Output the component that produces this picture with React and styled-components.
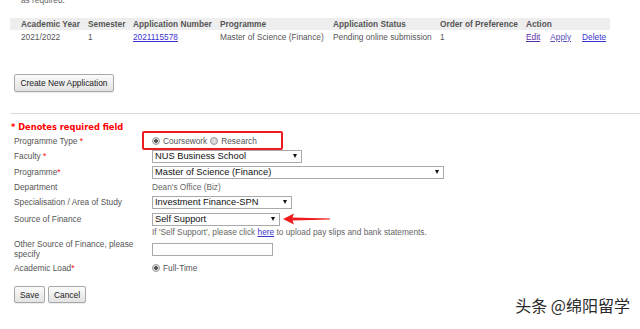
import React from "react";
import styled, { createGlobalStyle } from "styled-components";

const Global = createGlobalStyle`
  html, body { margin: 0; padding: 0; background: #fff; }
  body { font-family: "Liberation Sans", Arial, sans-serif; overflow: hidden; }
`;

const Page = styled.div`
  position: relative;
  width: 640px;
  height: 329px;
  overflow: hidden;
  padding-left: 10px;
  box-sizing: border-box;
`;

const TopNote = styled.div`
  margin-top: -5px;
  padding-left: 11px;
  line-height: 10px;
  height: 10px;
  font-size: 8.3px;
  color: #666;
`;

const Table = styled.div`
  width: 600px;
  margin-top: 13px;
`;

const TRow = styled.div`
  display: grid;
  grid-template-columns: 67px 45px 87px 113px 107px 86px 1fr;
  padding-left: 11px;
  height: ${(p) => p.$h}px;
  align-items: center;
  background: ${(p) => (p.$head ? "#eeeeee" : "transparent")};
  font-size: 8.3px;
  font-weight: ${(p) => (p.$head ? "bold" : "normal")};
  color: #555;
  white-space: nowrap;
`;

const Link = styled.a`
  color: ${(p) => p.$c || "#3a33cc"};
  text-decoration: underline;
  margin-right: ${(p) => p.$mr || 0}px;
  cursor: pointer;
`;

const Button = styled.button`
  height: ${(p) => p.$h}px;
  width: ${(p) => p.$w}px;
  padding: 0;
  font-family: "Liberation Sans", Arial, sans-serif;
  font-size: 8.4px;
  color: #222;
  background: linear-gradient(#fbfbfb, #e3e3e3);
  border: 1px solid #a8a8a8;
  border-radius: 2px;
  box-shadow: 0 1px 1px rgba(0, 0, 0, 0.08);
`;

const CreateWrap = styled.div`
  margin-top: 31px;
  padding-left: 4px;
  display: flex;
`;

const Rule = styled.div`
  margin-top: 21px;
  border-top: 1px solid #dadada;
  margin-right: -10px;
`;

const Required = styled.div`
  margin-top: 8px;
  padding-left: 1px;
  height: 11px;
  line-height: 11px;
  font-family: "DejaVu Sans", Verdana, sans-serif;
  font-weight: bold;
  font-size: 8.3px;
  color: #f00;
`;

const Form = styled.div`
  padding-left: 4px;
`;

const Row = styled.div`
  display: flex;
  align-items: center;
  height: ${(p) => p.$h}px;
`;

const Label = styled.div`
  width: 138px;
  flex: none;
  font-size: 8.3px;
  line-height: 10px;
  color: #555;
`;

const Star = styled.span`
  color: #f00;
`;

const Value = styled.div`
  position: relative;
  display: flex;
  align-items: center;
  font-size: 8.3px;
  color: ${(p) => p.$c || "#555"};
  white-space: nowrap;
`;

const Radio = styled.span`
  display: inline-block;
  box-sizing: border-box;
  width: 8px;
  height: 8px;
  border-radius: 50%;
  border: 1px solid #9a9a9a;
  background: radial-gradient(circle, ${(p) => (p.$on ? "#555 0 1.6px" : "#ddd 0 0")}, #e4e4e4 ${(p) => (p.$on ? "2px" : "0")}, #cfcfcf 100%);
  margin-right: 3px;
`;

const RadioText = styled.span`
  margin-right: ${(p) => p.$mr || 0}px;
  color: #555;
`;

const Highlight = styled.div`
  position: absolute;
  left: -10px;
  top: -5px;
  width: 141px;
  height: 19px;
  box-sizing: border-box;
  border: 2px solid #ec1c24;
  border-radius: 2px;
`;

const SelectBox = styled.div`
  box-sizing: border-box;
  width: ${(p) => p.$w}px;
  height: 13px;
  border: 1px solid #a9a9a9;
  background: #fff;
  display: flex;
  align-items: center;
  justify-content: space-between;
  padding-left: 2px;
  padding-right: 4px;
  font-size: 9.3px;
  color: #111;
`;

const Caret = styled.span`
  width: 0;
  height: 0;
  border-left: 2.5px solid transparent;
  border-right: 2.5px solid transparent;
  border-top: 4px solid #111;
`;

const TextInput = styled.div`
  box-sizing: border-box;
  width: 121px;
  height: 13px;
  border: 1px solid #a9a9a9;
  background: #fff;
`;

const Arrow = styled.svg`
  position: absolute;
  left: 131px;
  top: 0px;
`;

const Actions = styled.div`
  margin-top: 11px;
  display: flex;
  gap: 3px;
`;

const Watermark = styled.div`
  position: absolute;
  right: 10px;
  bottom: 14px;
  font-family: "Noto Sans CJK SC", sans-serif;
  font-size: 16px;
  line-height: 20px;
  color: #2a2a2a;
  text-shadow: 0 0 2px #fff, 0 0 2px #fff;
`;

function Select({ w, children }) {
  return (
    <SelectBox $w={w}>
      <span>{children}</span>
      <Caret />
    </SelectBox>
  );
}

export default function App() {
  return (
    <>
      <Global />
      <Page>
        <TopNote>as required.</TopNote>
        <Table>
          <TRow $head $h={12}>
            <span>Academic Year</span>
            <span>Semester</span>
            <span>Application Number</span>
            <span>Programme</span>
            <span>Application Status</span>
            <span>Order of Preference</span>
            <span>Action</span>
          </TRow>
          <TRow $h={13}>
            <span>2021/2022</span>
            <span>1</span>
            <span>
              <Link>2021115578</Link>
            </span>
            <span>Master of Science (Finance)</span>
            <span>Pending online submission</span>
            <span>1</span>
            <span>
              <Link $c="#5a2fa8" $mr={10}>Edit</Link>
              <Link $c="#5a4fb8" $mr={11}>Apply</Link>
              <Link>Delete</Link>
            </span>
          </TRow>
        </Table>
        <CreateWrap>
          <Button $w={100} $h={18}>Create New Application</Button>
        </CreateWrap>
        <Rule />
        <Required>* Denotes required field</Required>
        <Form>
          <Row $h={16}>
            <Label>
              Programme Type <Star>*</Star>
            </Label>
            <Value>
              <Highlight />
              <Radio $on />
              <RadioText $mr={3}>Coursework</RadioText>
              <Radio />
              <RadioText>Research</RadioText>
            </Value>
          </Row>
          <Row $h={14}>
            <Label>
              Faculty <Star>*</Star>
            </Label>
            <Value>
              <Select w={150}>NUS Business School</Select>
            </Value>
          </Row>
          <Row $h={18}>
            <Label>
              Programme<Star>*</Star>
            </Label>
            <Value>
              <Select w={292}>Master of Science (Finance)</Select>
            </Value>
          </Row>
          <Row $h={11}>
            <Label>Department</Label>
            <Value $c="#666">Dean's Office (Biz)</Value>
          </Row>
          <Row $h={20}>
            <Label>Specialisation / Area of Study</Label>
            <Value>
              <Select w={140}>Investment Finance-SPN</Select>
            </Value>
          </Row>
          <Row $h={14}>
            <Label>Source of Finance</Label>
            <Value>
              <Select w={128}>Self Support</Select>
              <Arrow width="48" height="12" viewBox="0 0 48 12">
                <polygon points="0,6 11,0.5 9.5,4.6 47,5.6 47,6.4 9.5,7.6 11,11.5" fill="#ee1c1c" />
              </Arrow>
            </Value>
          </Row>
          <Row $h={12}>
            <Label />
            <Value $c="#666">
              If 'Self Support', please click&nbsp;<Link>here</Link>&nbsp;to upload pay slips and bank statements.
            </Value>
          </Row>
          <Row $h={22}>
            <Label>Other Source of Finance, please specify</Label>
            <Value>
              <TextInput />
            </Value>
          </Row>
          <Row $h={15}>
            <Label>
              Academic Load<Star>*</Star>
            </Label>
            <Value>
              <Radio $on />
              <RadioText>Full-Time</RadioText>
            </Value>
          </Row>
          <Actions>
            <Button $w={31} $h={17}>Save</Button>
            <Button $w={38} $h={17}>Cancel</Button>
          </Actions>
        </Form>
        <Watermark>头条 @绵阳留学</Watermark>
      </Page>
    </>
  );
}
